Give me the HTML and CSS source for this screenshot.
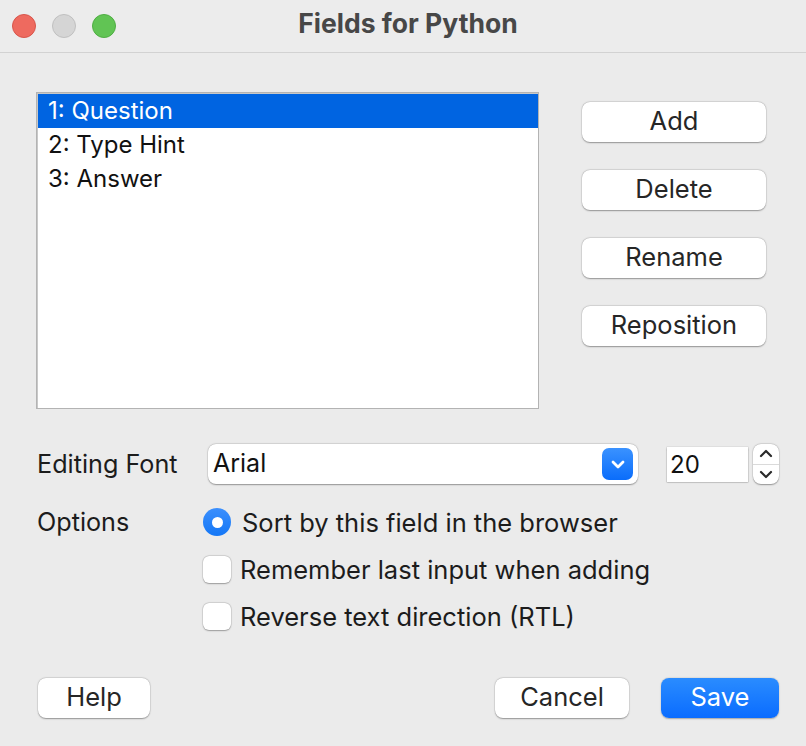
FILE: index.html
```html
<!DOCTYPE html>
<html>
<head>
<meta charset="utf-8">
<link rel="stylesheet" href="styles.css">
</head>
<body>
<div class="window">
  <div class="titlebar">
    <div class="lights">
      <span class="light red"></span>
      <span class="light gray"></span>
      <span class="light green"></span>
    </div>
    <div class="title">Fields for Python</div>
  </div>
  <div class="content">
    <div class="top">
      <div class="list">
        <div class="row selected">1: Question</div>
        <div class="row">2: Type Hint</div>
        <div class="row">3: Answer</div>
      </div>
      <div class="side">
        <button class="btn side-btn">Add</button>
        <button class="btn side-btn">Delete</button>
        <button class="btn side-btn">Rename</button>
        <button class="btn side-btn">Reposition</button>
      </div>
    </div>
    <div class="font-row">
      <div class="label">Editing Font</div>
      <div class="select">
        <span class="select-text">Arial</span>
        <span class="select-arrow">
          <svg width="14" height="9" viewBox="0 0 14 9"><path d="M2 2 L7 7 L12 2" fill="none" stroke="#fff" stroke-width="2.8" stroke-linecap="round" stroke-linejoin="round"/></svg>
        </span>
      </div>
      <div class="num">20</div>
      <div class="stepper">
        <span class="step">
          <svg width="14" height="9" viewBox="0 0 14 9"><path d="M2 7 L7 2 L12 7" fill="none" stroke="#2a2a2a" stroke-width="2.2" stroke-linecap="round" stroke-linejoin="round"/></svg>
        </span>
        <span class="step-div"></span>
        <span class="step">
          <svg width="14" height="9" viewBox="0 0 14 9"><path d="M2 2 L7 7 L12 2" fill="none" stroke="#2a2a2a" stroke-width="2.2" stroke-linecap="round" stroke-linejoin="round"/></svg>
        </span>
      </div>
    </div>
    <div class="options-row">
      <div class="label opt-label">Options</div>
      <div class="opts">
        <div class="opt"><span class="radio"><span class="dot"></span></span><span>Sort by this field in the browser</span></div>
        <div class="opt"><span class="check"></span><span>Remember last input when adding</span></div>
        <div class="opt"><span class="check"></span><span>Reverse text direction (RTL)</span></div>
      </div>
    </div>
    <div class="footer">
      <button class="btn help">Help</button>
      <div class="footer-right">
        <button class="btn cancel">Cancel</button>
        <button class="btn primary save">Save</button>
      </div>
    </div>
  </div>
</div>
</body>
</html>
```
FILE: styles.css
```css
* { box-sizing: border-box; }
html, body { margin: 0; padding: 0; }
body {
  width: 806px;
  height: 746px;
  background: #ececec;
  font-family: Inter, "Noto Sans", sans-serif;
  color: #1c1c1c;
  overflow: hidden;
}
.window { width: 806px; height: 746px; background: #ebebeb; }
.titlebar {
  height: 53px;
  background: #ececec;
  border-bottom: 1px solid #d2d2d2;
  display: flex;
  align-items: center;
  position: relative;
}
.lights { display: flex; gap: 16px; padding-left: 12px; padding-top: 0; }
.light { width: 24px; height: 24px; border-radius: 50%; display: block; }
.light.red { background: #ee6a5f; border: 1px solid #d8554b; }
.light.gray { background: #d5d5d5; border: 1px solid #c0c0c0; }
.light.green { background: #61c454; border: 1px solid #4fae43; }
.title {
  position: absolute;
  left: 0; right: 0; top: 0;
  height: 52px;
  line-height: 46px;
  padding-left: 10px;
  text-align: center;
  font-weight: 700;
  font-size: 26.5px;
  color: #474747;
}
.content { padding: 39px 27px 0 36px; }
.top { display: flex; align-items: flex-start; }
.list {
  width: 503px;
  height: 317px;
  background: #fff;
  border: 1px solid #b3b3b3;
  box-shadow: inset 1px 1px 0 #c8c8c8;
  padding: 1px 0 0 1px;
}
.row {
  height: 34px;
  line-height: 34px;
  padding-left: 10px;
  font-size: 24px;
  color: #111;
}
.row.selected { background: #0064e1; color: #fff; }
.side {
  margin-left: 43px;
  margin-top: 10px;
  display: flex;
  flex-direction: column;
  gap: 28px;
}
.btn {
  font-family: inherit;
  font-size: 25.5px;
  color: #262626;
  background: #fff;
  border: none;
  border-radius: 8px;
  height: 40px;
  padding: 0 0 3px 0;
  box-shadow: 0 0.5px 1.5px rgba(0,0,0,0.35), 0 0 0 0.5px rgba(0,0,0,0.08);
}
.side-btn { width: 184px; }
.font-row {
  display: flex;
  align-items: center;
  margin-top: 35px;
  height: 40px;
}
.label { font-size: 25.2px; color: #1c1c1c; padding-left: 1px; }
.font-row .label { width: 172px; }
.select {
  width: 430px;
  height: 40px;
  background: #fff;
  border-radius: 8px;
  box-shadow: 0 0.5px 1.5px rgba(0,0,0,0.35), 0 0 0 0.5px rgba(0,0,0,0.08);
  display: flex;
  align-items: center;
  justify-content: space-between;
  padding: 0 5px 0 5px;
}
.select-text { font-size: 25px; color: #111; padding-bottom: 2px; }
.select-arrow {
  width: 31px;
  height: 32px;
  border-radius: 7px;
  background: linear-gradient(#3a92ff, #0a6dfb);
  display: flex;
  align-items: center;
  justify-content: center;
}
.num {
  margin-left: 29px;
  width: 81px;
  height: 35px;
  background: #fff;
  box-shadow: 0 0.5px 1.5px rgba(0,0,0,0.35), 0 0 0 0.5px rgba(0,0,0,0.1);
  font-size: 24px;
  line-height: 35px;
  padding-left: 3px;
  color: #111;
}
.stepper {
  margin-left: 5px;
  width: 26px;
  height: 40px;
  background: #fff;
  border-radius: 8px;
  box-shadow: 0 0.5px 1.5px rgba(0,0,0,0.35), 0 0 0 0.5px rgba(0,0,0,0.08);
  display: flex;
  flex-direction: column;
  align-items: center;
}
.step { flex: 1; display: flex; align-items: center; justify-content: center; }
.step-div { width: 100%; height: 1px; background: #dadada; }
.options-row { display: flex; margin-top: 24px; }
.opt-label { width: 167px; line-height: 28px; }
.opts { display: flex; flex-direction: column; gap: 19px; }
.opt {
  display: flex;
  align-items: center;
  font-size: 25.5px;
  color: #1c1c1c;
  height: 28px;
}
.radio {
  width: 28px;
  height: 28px;
  border-radius: 50%;
  background: linear-gradient(#3b8ffd, #1477f6);
  display: flex;
  align-items: center;
  justify-content: center;
  margin-right: 11px;
}
.dot { width: 11px; height: 11px; border-radius: 50%; background: #fff; }
.check {
  width: 28px;
  height: 27px;
  background: #fff;
  border-radius: 6px;
  box-shadow: 0 0.5px 1.5px rgba(0,0,0,0.3), 0 0 0 0.5px rgba(0,0,0,0.12);
  margin-right: 9px;
}
.footer {
  display: flex;
  justify-content: space-between;
  margin-top: 48px;
  padding-left: 2px;
}
.footer-right { display: flex; gap: 32px; }
.help { width: 112px; }
.cancel { width: 134px; }
.save { width: 118px; }
.primary {
  background: linear-gradient(#2a8cff, #0a6cff);
  color: #fff;
  box-shadow: 0 0.5px 1.5px rgba(0,0,0,0.3);
}
```
